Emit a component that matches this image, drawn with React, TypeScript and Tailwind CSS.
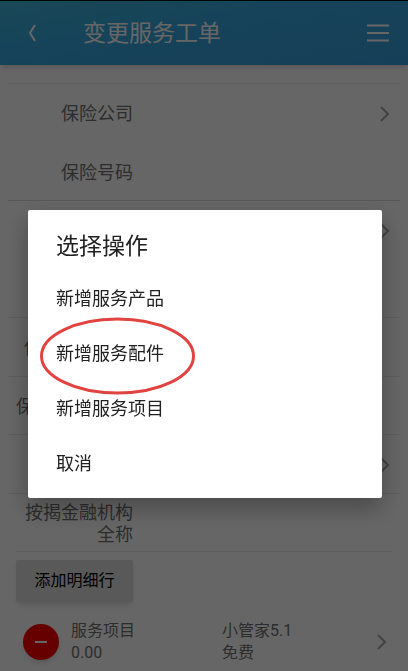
import React, { useState } from "react";

type FormRow = {
  id: string;
  label?: string;
  align?: string;
  line?: string;
  arrow?: boolean;
};

const rows: FormRow[] = [
  { id: "company", label: "保险公司", arrow: true },
  { id: "number", label: "保险号码", line: "border-transparent" },
  { id: "third", arrow: true, line: "border-[#d8d8d8]" },
  { id: "fourth", line: "border-transparent" },
  { id: "fifth", label: "保", align: "text-left pl-2" },
  { id: "sixth", label: "保", align: "text-left" },
  { id: "seventh", arrow: true },
  { id: "bank", label: "按揭金融机构全称" },
];

const actions = ["新增服务产品", "新增服务配件", "新增服务项目", "取消"];

const ChevronRight = () => (
  <svg
    className="w-3 h-5 shrink-0"
    viewBox="0 0 12 20"
    fill="none"
    stroke="#a8a8a8"
    strokeWidth="2"
  >
    <path d="M2 3 L9 10 L2 17" />
  </svg>
);

const Header = () => (
  <header className="flex items-center h-[65px] pl-5 pr-[18px] border-t border-black bg-linear-to-br from-[#40b4d8] via-[#38a8e0] via-40% to-[#369edc] shadow-md text-white">
    <button type="button" aria-label="返回" className="w-6 h-8 grid place-items-center">
      <svg
        className="w-3 h-5"
        viewBox="0 0 12 20"
        fill="none"
        stroke="currentColor"
        strokeWidth="2"
      >
        <path d="M9 2 L4 10 L9 18" />
      </svg>
    </button>
    <h1 className="flex-1 pt-[2px] pl-[39px] text-[23px] leading-8">变更服务工单</h1>
    <button type="button" aria-label="菜单">
      <svg className="w-6 h-5" viewBox="0 0 24 20" stroke="currentColor" strokeWidth="2">
        <path d="M1 2.5 H23 M1 10 H23 M1 17.5 H23" />
      </svg>
    </button>
  </header>
);

const ActionDialog = ({ onClose }: { onClose: () => void }) => (
  <div className="fixed inset-0 flex items-center pt-9 pl-7 pr-[26px] bg-black/60">
    <div
      role="dialog"
      aria-labelledby="dialog-title"
      className="w-full rounded-xs bg-white pt-[14px] pb-[7px] text-[#212121] shadow-[0_10px_24px_rgba(0,0,0,0.3)]"
    >
      <h2 id="dialog-title" className="px-7 pb-px text-[23px] leading-[46px]">
        选择操作
      </h2>
      <ul>
        {actions.map((action, index) => (
          <li key={action} className="relative">
            <button
              type="button"
              className="w-full px-7 text-left text-lg leading-[55px]"
              onClick={onClose}
            >
              {action}
            </button>
            {/* hand-drawn style ring round the parts entry */}
            {index === 1 && (
              <svg
                className="absolute left-3 -top-[9px] w-[156px] h-[78px] pointer-events-none"
                viewBox="0 0 156 78"
                fill="none"
                stroke="#e04340"
                strokeWidth="3"
              >
                <ellipse cx="77.5" cy="39" rx="76" ry="37" />
              </svg>
            )}
          </li>
        ))}
      </ul>
    </div>
  </div>
);

const App: React.FC = () => {
  const [open, setOpen] = useState(true);

  return (
    <div className="min-h-screen bg-white font-[Roboto,'Noto_Sans_CJK_SC',sans-serif]">
      <Header />

      <main className="pt-[18px]">
        <ul className="mx-2">
          {rows.map((row) => (
            <li
              key={row.id}
              className={`flex items-center justify-between min-h-[59px] even:min-h-[58px] pt-[2px] pl-2 pr-[9px] border-t ${row.line ?? "border-[#ededed]"}`}
            >
              <span
                className={`w-[117px] text-lg leading-[22px] text-[#707070] ${row.align ?? "text-right"}`}
              >
                {row.label}
              </span>
              {row.arrow && <ChevronRight />}
            </li>
          ))}
        </ul>

        <div className="mx-4 pt-2 border-t border-[#ededed]">
          <button
            type="button"
            className="h-[42px] w-[117px] rounded-xs bg-[#dedede] text-base text-black shadow-md"
            onClick={() => setOpen(true)}
          >
            添加明细行
          </button>
        </div>

        <div className="flex items-center pt-[18px] pl-[23px] pr-5 text-base leading-[22px] text-[#707070]">
          <button
            type="button"
            aria-label="删除"
            className="grid place-items-center size-9 rounded-full bg-[#ff0000] shadow-md"
          >
            <svg className="w-3 h-1" viewBox="0 0 12 4" stroke="#ffffff" strokeWidth="2">
              <path d="M0 2 H12" />
            </svg>
          </button>
          <div className="flex flex-1 pl-3">
            <div className="w-[151px]">
              <p>服务项目</p>
              <p>0.00</p>
            </div>
            <div>
              <p>小管家5.1</p>
              <p>免费</p>
            </div>
          </div>
          <ChevronRight />
        </div>
      </main>

      {open && <ActionDialog onClose={() => setOpen(false)} />}
    </div>
  );
};

export default App;
